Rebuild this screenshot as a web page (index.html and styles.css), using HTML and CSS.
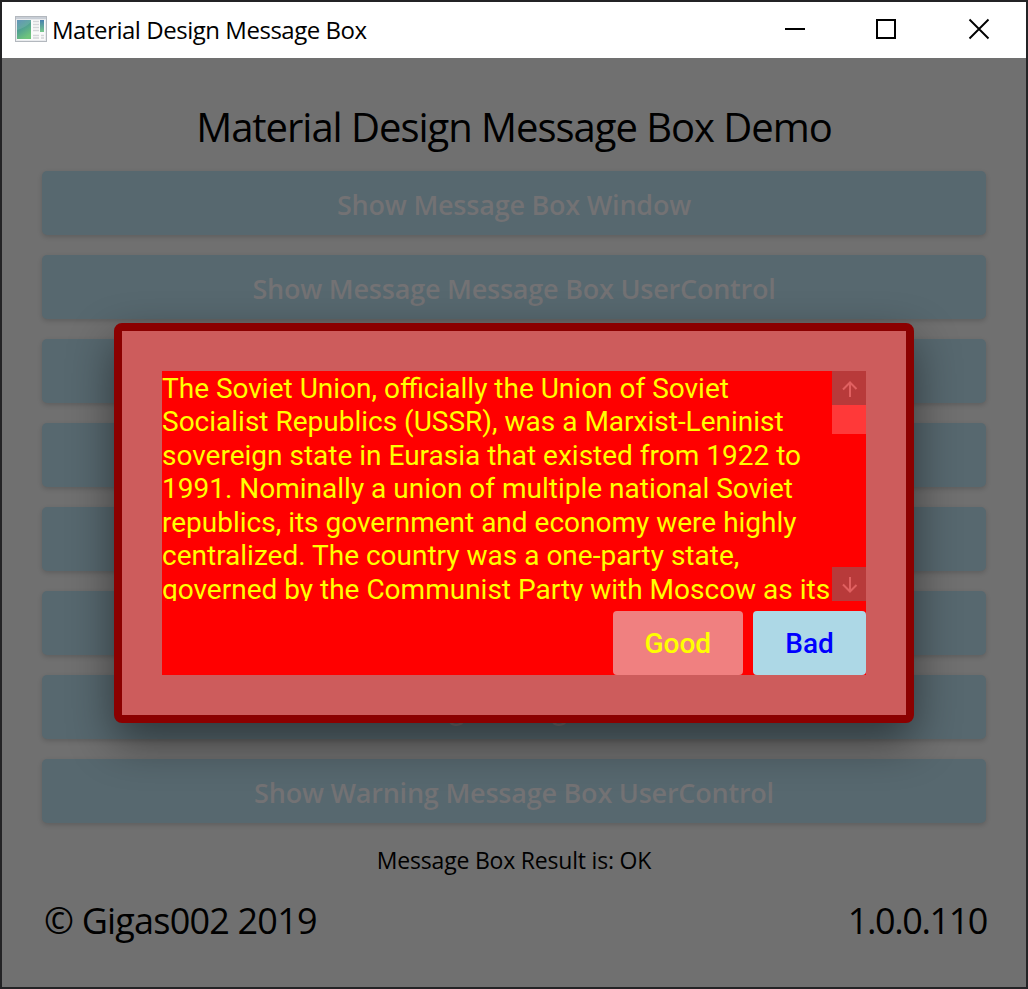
FILE: index.html
```html
<!DOCTYPE html>
<html lang="en">
<head>
<meta charset="utf-8">
<title>Material Design Message Box</title>
<link rel="stylesheet" href="styles.css">
</head>
<body>
<div class="window">
  <div class="backdrop-strip"></div>
  <header class="titlebar">
    <svg class="app-icon" width="32" height="26" viewBox="0 0 32 26">
      <defs>
        <linearGradient id="pane" x1="0" y1="0" x2="0.5" y2="1"><stop offset="0" stop-color="#4d86b0"/><stop offset="0.5" stop-color="#50a092"/><stop offset="1" stop-color="#6fc47c"/></linearGradient>
        <linearGradient id="side" x1="0" y1="0" x2="0" y2="1"><stop offset="0" stop-color="#4780ae"/><stop offset="1" stop-color="#78c98c"/></linearGradient>
      </defs>
      <rect x="0.5" y="0.5" width="31" height="25" fill="#e9ebee" stroke="#b3b8be"/>
      <rect x="1" y="1" width="30" height="2" fill="#c8ced6"/>
      <rect x="2" y="4" width="28" height="20" fill="#fafafa"/>
      <rect x="2" y="4" width="14" height="19" fill="url(#pane)"/>
      <path d="M2 14Q10 12 16 6V4H2Z" fill="#fff" opacity=".12"/>
      <path d="M18 5.500h6M18 8.500h6M18 11.500h6M18 14.500h6M18 19.500h6M18 22h6M26 19.500h3M26 22h3" stroke="#d3d5d8" stroke-width="1.500"/>
      <rect x="25" y="4" width="4" height="12" fill="url(#side)"/>
    </svg>
    <span class="caption">Material Design Message Box</span>
    <svg class="controls" width="206" height="22" viewBox="0 0 206 22" fill="none" stroke="#000" stroke-width="2">
      <path d="M0 11h20"/>
      <rect x="92" y="2" width="18" height="18"/>
      <path d="M184.500 1.500l19 19M203.500 1.500l-19 19" stroke-width="1.900"/>
    </svg>
  </header>
  <main class="content">
    <h1 class="heading">Material Design Message Box Demo</h1>
    <div class="buttons">
      <button class="action">Show Message Box Window</button>
      <button class="action">Show Message Message Box UserControl</button>
      <button class="action"></button>
      <button class="action"></button>
      <button class="action"></button>
      <button class="action"></button>
      <button class="action">Show Warning Message Box Window</button>
      <button class="action">Show Warning Message Box UserControl</button>
    </div>
    <p class="result">Message Box Result is: OK</p>
    <footer class="footer"><span class="copy">© Gigas002 2019</span><span class="version">1.0.0.110</span></footer>
  </main>
  <section class="dialog">
    <div class="panel">
      <div class="message">
        <div class="text">The Soviet Union, officially the Union of Soviet<br>Socialist Republics (USSR), was a Marxist-Leninist<br>sovereign state in Eurasia that existed from 1922 to<br>1991. Nominally a union of multiple national Soviet<br>republics, its government and economy were highly<br>centralized. The country was a one-party state,<br>governed by the Communist Party with Moscow as its</div>
        <div class="scrollbar">
          <div class="arrow"><svg width="34" height="34" viewBox="0 0 34 34"><path d="M18 26V11M11 18.500l7-7 6.500 6.500"/></svg></div>
          <div class="thumb"></div>
          <div class="arrow down"><svg width="34" height="34" viewBox="0 0 34 34"><path d="M18 10v15M11 17.500l7 7 6.500-6.500"/></svg></div>
        </div>
      </div>
      <div class="choices">
        <button class="choice good">Good</button>
        <button class="choice bad">Bad</button>
      </div>
    </div>
  </section>
</div>
</body>
</html>
```
FILE: styles.css
```css
* { box-sizing: border-box; }
body { margin: 0; font-family: "Open Sans", "Noto Sans", sans-serif; color: #000; }
button { border: 0; padding: 0; font: inherit; }
.window {
  position: relative; width: 1028px; height: 989px; overflow: hidden;
  border: 2px solid #232325; background: #707070;
  display: flex; flex-direction: column; white-space: nowrap;
}
.backdrop-strip { position: absolute; left: 23px; top: -2px; width: 167px; height: 2px; background: #1f4e63; }
.titlebar { height: 56px; flex: none; background: #fff; display: flex; align-items: center; padding: 0 35px 0 13px; }
.app-icon { margin-top: -3px; }
.caption { margin: -2px 0 0 5px; font-size: 24px; letter-spacing: -0.47px; }
.controls { margin-left: auto; margin-top: -2px; }
.content { padding: 0 40px; }
.heading { margin: 0; height: 113px; padding-top: 42px; text-align: center; font-size: 40px; line-height: 54px; font-weight: 400; letter-spacing: -1.03px; }
.buttons { display: grid; gap: 20px; }
.action {
  height: 64px; border-radius: 5px; background: #57686f; color: #737274;
  font-size: 27px; font-weight: 600; line-height: 64px; padding-top: 2px;
  box-shadow: 0 2px 5px rgba(0,0,0,.16); letter-spacing: -0.22px;
}
.result { margin: 21px 0 0; height: 32px; line-height: 32px; text-align: center; font-size: 23px; letter-spacing: -0.2px; }
.footer { display: flex; justify-content: space-between; margin-top: 20px; padding-left: 2px; font-size: 36px; line-height: 50px; }
.copy { letter-spacing: -0.8px; }
.version { letter-spacing: -1.4px; margin-right: -1px; }
.dialog {
  position: absolute; left: 112px; top: 321px; width: 800px; height: 400px;
  border: 8px solid #8b0000; border-radius: 8px; background: #8b0000;
  box-shadow: 0 18px 46px rgba(0,0,0,.48);
}
.panel { height: 384px; padding: 40px; background: #cd5c5c; }
.message { display: flex; justify-content: space-between; height: 230px; background: #f00; overflow: hidden; }
.text { padding-top: 0.5px; color: #ff0; font-family: Roboto, sans-serif; font-size: 28px; line-height: 33.6px; }
.scrollbar { width: 34px; display: flex; flex-direction: column; }
.arrow { height: 34px; background: #b83a3a; }
.arrow svg { display: block; fill: none; stroke: #e06060; stroke-width: 2; }
.thumb { height: 29px; background: #ff3939; }
.down { margin-top: auto; }
.choices { display: flex; justify-content: flex-end; gap: 10px; height: 74px; padding-top: 10px; background: #f00; }
.choice { height: 64px; border-radius: 4px; font-family: Roboto, sans-serif; font-size: 28px; font-weight: 500; }
.good { width: 130.5px; background: #f08080; color: #ff0; }
.bad { width: 113px; background: #add8e6; color: #00f; }
```
